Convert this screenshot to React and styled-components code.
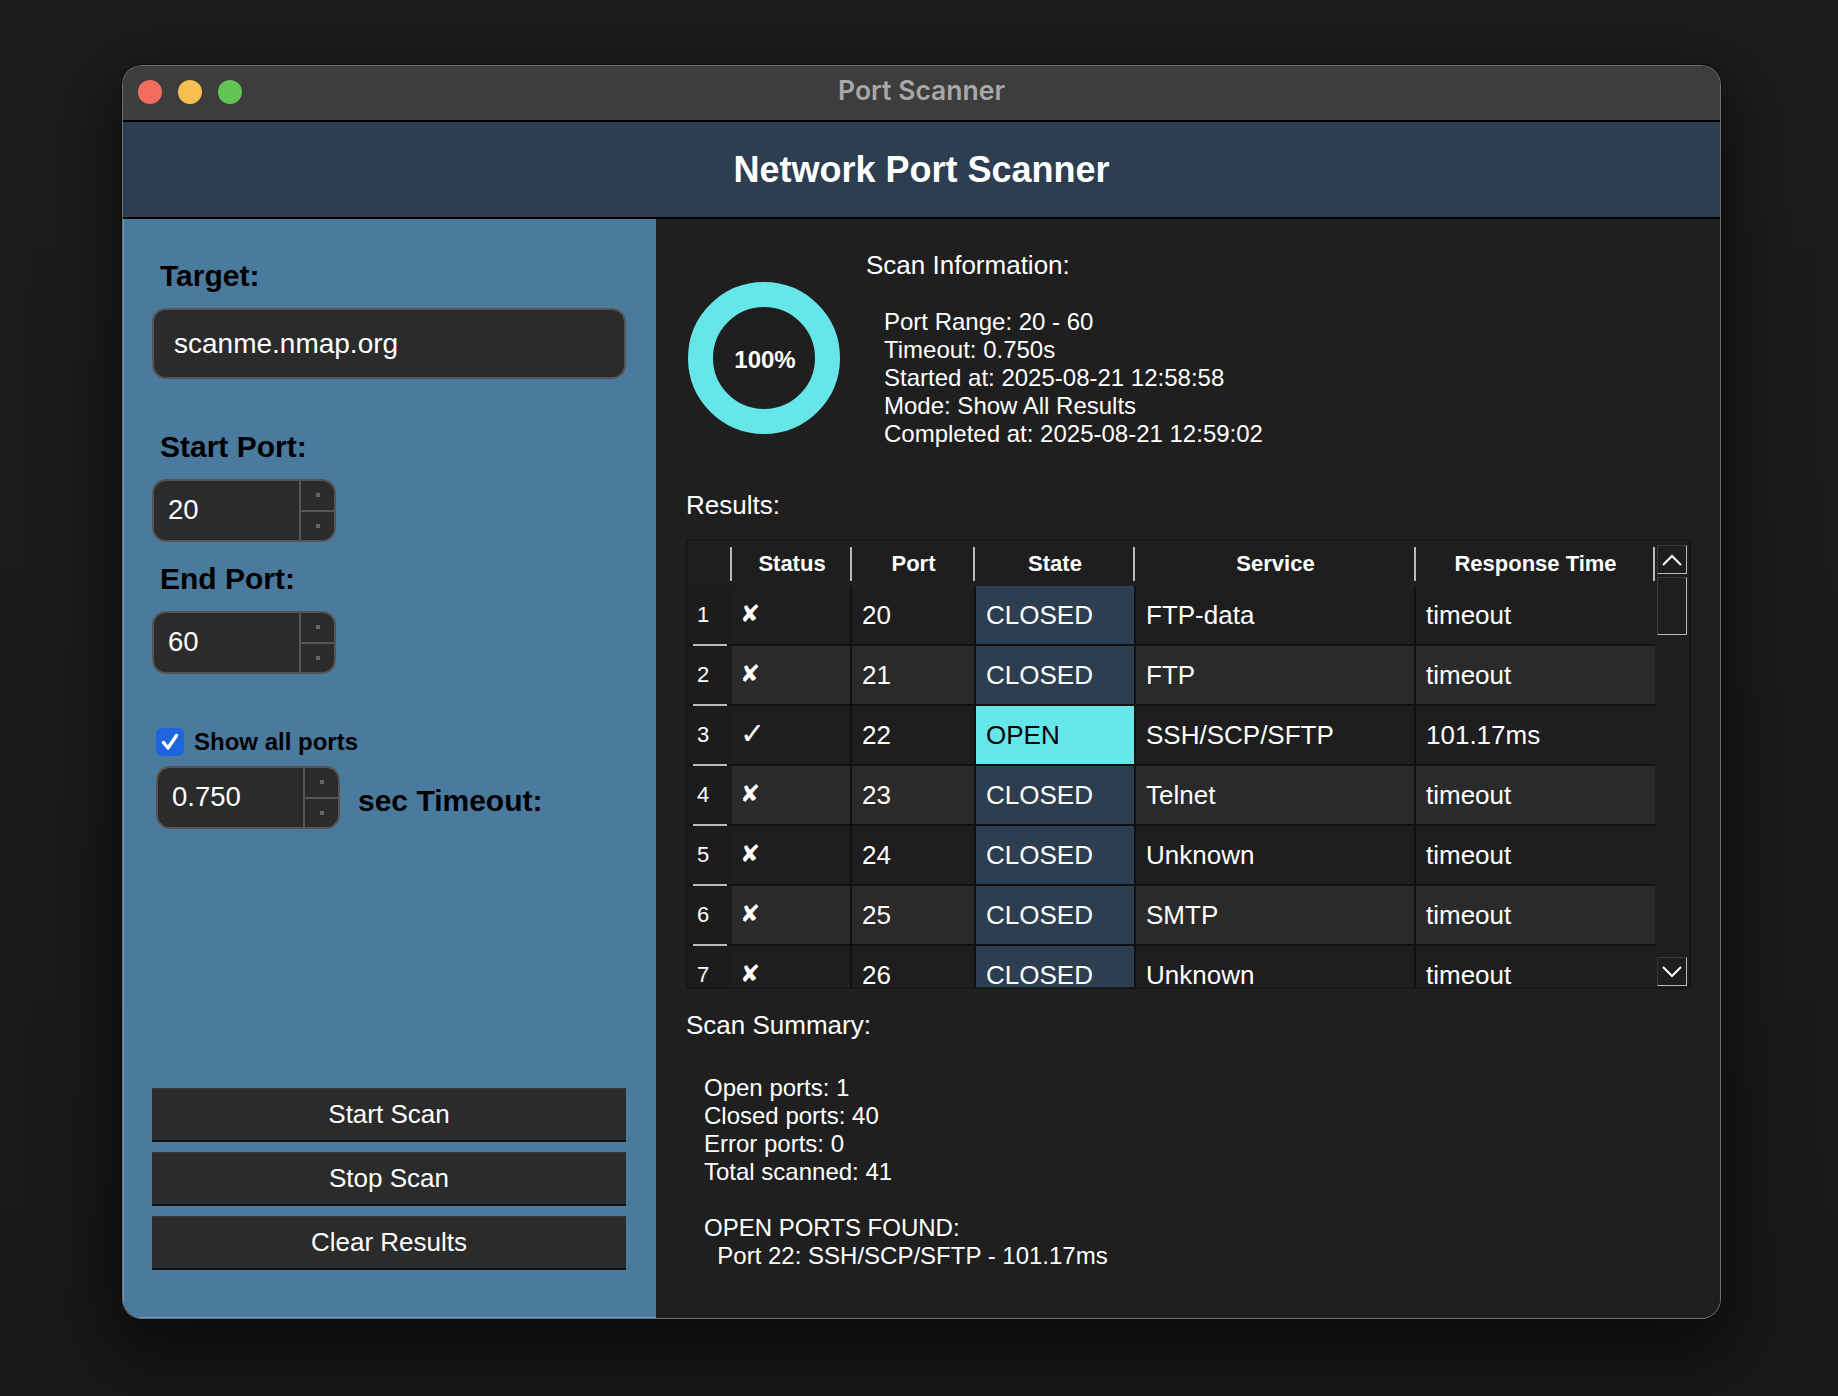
import React from "react";
import styled, { createGlobalStyle } from "styled-components";

const Global = createGlobalStyle`
  html, body { margin: 0; padding: 0; background: #1b1b1b; }
  body { font-family: "Liberation Sans", Arial, sans-serif; }
`;
const Page = styled.div`
  width: 1838px; height: 1396px; box-sizing: border-box; padding: 66px 0 0 123px;
  background: linear-gradient(#1d1d1d, #1a1a1a 70%, #181818);
  overflow: hidden;
`;
const Window = styled.div`
  width: 1597px; height: 1252px; display: flex; flex-direction: column;
  border-radius: 19px; overflow: hidden; background: #1f1f1f;
  box-shadow: 0 0 0 1px #707070, 0 0 0 2px #0c0c0c, 0 24px 70px 14px rgba(0,0,0,.55);
`;
const TitleBar = styled.div`
  height: 54px; flex: none; display: flex; align-items: center; justify-content: center; position: relative;
  background: #3d3d3d; border-bottom: 2px solid #000;
  box-sizing: content-box;
`;
const Lights = styled.div`
  position: absolute; left: 15px; top: 14px; display: flex; gap: 16px;
`;
const Light = styled.span`
  width: 24px; height: 24px; border-radius: 50%; background: ${p => p.$c};
`;
const TitleText = styled.span`
  font: 600 26.5px "Inter", sans-serif; color: #a8a8a8; padding-bottom: 6px;
`;
const Header = styled.header`
  height: 95px; flex: none; display: flex; align-items: center; justify-content: center;
  background: #2c3e50; border-bottom: 2px solid #000; box-sizing: content-box;
  color: #fff; font-size: 36px; font-weight: 700;
`;
const Body = styled.div`
  flex: 1; display: flex; min-height: 0;
`;
const Sidebar = styled.aside`
  width: 533px; flex: none; box-sizing: border-box; background: #4a7a9e;
  border-left: 1px solid #6d9cc0; border-bottom: 1px solid #6d9cc0;
  padding: 40px 30px 47px 28px; display: flex; flex-direction: column;
`;
const Label = styled.label`
  display: block; padding-left: 8px; font-size: 30px; font-weight: 700; color: #000; line-height: 34px;
  margin-bottom: 15px;
`;
const TextInput = styled.div`
  height: 71px; box-sizing: border-box; border: 2px solid #555; border-radius: 14px; background: #2b2b2b;
  color: #fff; font-size: 28px; display: flex; align-items: center; padding-left: 20px; margin-bottom: 51px;
`;
const Spin = styled.div`
  width: 184px; height: 63px; box-sizing: border-box; border: 2px solid #555; border-radius: 14px; background: #2b2b2b;
  display: flex; overflow: hidden; flex: none;
  margin-bottom: ${p => p.$mb || 0}px;
`;
const SpinValue = styled.div`
  flex: 1; color: #fff; font-size: 27.5px; display: flex; align-items: center; padding: 0 0 2px 14px;
`;
const SpinButtons = styled.div`
  width: 33px; border-left: 2px solid #555; display: flex; flex-direction: column;
`;
const SpinStep = styled.div`
  flex: 1; display: flex; align-items: center; justify-content: center;
  & + & { border-top: 2px solid #555; }
  &::after { content: ""; width: 4px; height: 4px; background: #666; }
`;
const CheckRow = styled.div`
  display: flex; align-items: center; gap: 10px; margin: 54px 0 10px 4px;
`;
const Check = styled.span`
  width: 28px; height: 28px; border-radius: 6px; background: #1f66de; display: flex; align-items: center; justify-content: center;
`;
const CheckLabel = styled.span`
  font-size: 24px; font-weight: 700; color: #000;
`;
const TimeoutRow = styled.div`
  display: flex; align-items: center; gap: 18px; padding-left: 4px;
`;
const TimeoutLabel = styled.span`
  font-size: 30px; font-weight: 700; color: #000; position: relative; top: 3px;
`;
const Buttons = styled.div`
  margin-top: auto; display: flex; flex-direction: column; gap: 10px;
`;
const Btn = styled.button`
  height: 54px; border: none; border-bottom: 2px solid #111; border-top: 1px solid #333; background: #2b2b2b;
  color: #fff; font: 26px "Liberation Sans", Arial, sans-serif; padding: 0;
`;
const Main = styled.main`
  flex: 1; min-width: 0; box-sizing: border-box; padding: 30px 30px 0 30px; background: #1f1f1f;
  color: #fff; font-size: 24px;
`;
const InfoRow = styled.section`
  display: flex; gap: 26px; height: 240px; padding-left: 2px;
`;
const Ring = styled.div`
  width: 152px; height: 152px; margin-top: 33px; border-radius: 50%; flex: none; box-sizing: border-box;
  border: 25px solid #67e6e9; display: flex; align-items: center; justify-content: center;
  font-weight: 700; font-size: 24px; color: #fff; padding: 3px 0 0 2px;
`;
const Heading = styled.div`
  font-size: 26px; line-height: 32px; color: #fff;
`;
const Lines = styled.div`
  line-height: 28px; white-space: pre; padding: ${p => p.$pad};
`;
const Frame = styled.div`
  margin-top: 18px; height: 450px; width: 1005px; display: flex; box-sizing: border-box;
  border: 2px solid #171717; background: #111; overflow: hidden;
`;
const Grid = styled.div`
  width: 967px; flex: none; overflow: hidden; display: flex; flex-direction: column;
`;
const HeadRow = styled.div`
  display: grid; grid-template-columns: 44px 120px 123px 160px 281px 239px; height: 45px; flex: none;
  background: #1e1e1e;
`;
const HeadCell = styled.div`
  display: flex; align-items: center; justify-content: center; font-size: 22px; font-weight: 700; color: #fff;
  position: relative;
  &::before { content: ""; position: absolute; left: -2px; top: 6px; bottom: 5px; width: 2px; background: #bbb; display: ${p => p.$none ? "none" : "block"}; }
  &::after { content: ""; position: absolute; right: 0; top: 6px; bottom: 5px; width: 2px; background: #bbb; display: ${p => p.$end ? "block" : "none"}; }
`;
const Row = styled.div`
  display: grid; grid-template-columns: 42px 118px 122px 158px 278px 239px; column-gap: 2px; height: 58px; flex: none; margin-bottom: 2px;
  & > *:first-child { margin-right: -2px; }
`;
const RowNum = styled.div`
  background: #1c1c1c; color: #fff; font-size: 22px; display: flex; align-items: center; justify-content: center; position: relative;
  padding-right: 14px; box-sizing: border-box;
  &::after { content: ""; position: absolute; left: 5px; right: 5px; bottom: -2px; height: 2px; background: #bbb; }
`;
const Cell = styled.div`
  background: ${p => p.$open ? "#67e6e9" : p.$closed ? "#2c3e50" : p.$alt ? "#2a2a2a" : "#1e1e1e"};
  color: ${p => p.$open ? "#000" : "#fff"}; font-size: 26px; display: flex; align-items: center; padding-left: ${p => p.$pl || 10}px;
`;
const Mark = styled.span`
  font-family: "DejaVu Sans", sans-serif; font-size: ${p => p.$ok ? 30 : 24}px; font-weight: 700; line-height: 1; position: relative; top: -1px;
`;
const Scroll = styled.div`
  width: 34px; flex: none; background: #1e1e1e; padding: 4px 2px 1px 2px; box-sizing: border-box; display: flex; flex-direction: column;
`;
const ScrollBtn = styled.div`
  height: 29px; width: 30px; box-sizing: border-box; border: 1px solid #3a3a3a; border-right-color: #bbb; border-bottom-color: #bbb; flex: none;
  display: flex; align-items: center; justify-content: center; color: #fff;
`;
const Thumb = styled.div`
  height: 58px; width: 30px; margin-top: 3px; box-sizing: border-box; border: 1px solid #3a3a3a; border-right-color: #bbb; border-bottom-color: #bbb; flex: none;
`;
const Spacer = styled.div` flex: 1; `;
const Summary = styled.section`
  margin-top: 20px;
`;

const rows = [
  [1, false, 20, "FTP-data", "timeout"],
  [2, false, 21, "FTP", "timeout"],
  [3, true, 22, "SSH/SCP/SFTP", "101.17ms"],
  [4, false, 23, "Telnet", "timeout"],
  [5, false, 24, "Unknown", "timeout"],
  [6, false, 25, "SMTP", "timeout"],
  [7, false, 26, "Unknown", "timeout"],
];

const SpinBox = ({ value, mb }) => (
  <Spin $mb={mb}>
    <SpinValue>{value}</SpinValue>
    <SpinButtons><SpinStep /><SpinStep /></SpinButtons>
  </Spin>
);

export default function App() {
  return (
    <Page>
      <Global />
      <Window>
        <TitleBar>
          <Lights>
            <Light $c="#f26d60" /><Light $c="#f6bf50" /><Light $c="#61c554" />
          </Lights>
          <TitleText>Port Scanner</TitleText>
        </TitleBar>
        <Header>Network Port Scanner</Header>
        <Body>
          <Sidebar>
            <Label>Target:</Label>
            <TextInput>scanme.nmap.org</TextInput>
            <Label>Start Port:</Label>
            <SpinBox value="20" mb={20} />
            <Label>End Port:</Label>
            <SpinBox value="60" />
            <CheckRow>
              <Check>
                <svg width="22" height="22" viewBox="0 0 22 22" fill="none"><path d="M4.5 11.5 L9 17 L17.5 4.5" stroke="#fff" strokeWidth="3.4" strokeLinecap="round" strokeLinejoin="round" /></svg>
              </Check>
              <CheckLabel>Show all ports</CheckLabel>
            </CheckRow>
            <TimeoutRow>
              <SpinBox value="0.750" />
              <TimeoutLabel>sec Timeout:</TimeoutLabel>
            </TimeoutRow>
            <Buttons>
              <Btn>Start Scan</Btn>
              <Btn>Stop Scan</Btn>
              <Btn>Clear Results</Btn>
            </Buttons>
          </Sidebar>
          <Main>
            <InfoRow>
              <Ring>100%</Ring>
              <div>
                <Heading>Scan Information:</Heading>
                <Lines $pad="27px 0 0 18px">{`Port Range: 20 - 60
Timeout: 0.750s
Started at: 2025-08-21 12:58:58
Mode: Show All Results
Completed at: 2025-08-21 12:59:02`}</Lines>
              </div>
            </InfoRow>
            <Heading>Results:</Heading>
            <Frame>
              <Grid>
                <HeadRow>
                  <HeadCell $none />
                  <HeadCell>Status</HeadCell>
                  <HeadCell>Port</HeadCell>
                  <HeadCell>State</HeadCell>
                  <HeadCell>Service</HeadCell>
                  <HeadCell $end>Response Time</HeadCell>
                </HeadRow>
                {rows.map(([n, open, port, svc, rt]) => {
                  const alt = n % 2 === 0;
                  return (
                    <Row key={n}>
                      <RowNum>{n}</RowNum>
                      <Cell $alt={alt} $pl={8}><Mark $ok={open}>{open ? "✓" : "✘"}</Mark></Cell>
                      <Cell $alt={alt}>{port}</Cell>
                      <Cell $open={open} $closed={!open}>{open ? "OPEN" : "CLOSED"}</Cell>
                      <Cell $alt={alt}>{svc}</Cell>
                      <Cell $alt={alt}>{rt}</Cell>
                    </Row>
                  );
                })}
              </Grid>
              <Scroll>
                <ScrollBtn>
                  <svg width="20" height="12" viewBox="0 0 20 12" fill="none"><path d="M1 11 L10 2 L19 11" stroke="#fff" strokeWidth="2" /></svg>
                </ScrollBtn>
                <Thumb />
                <Spacer />
                <ScrollBtn>
                  <svg width="20" height="12" viewBox="0 0 20 12" fill="none"><path d="M1 1 L10 10 L19 1" stroke="#fff" strokeWidth="2" /></svg>
                </ScrollBtn>
              </Scroll>
            </Frame>
            <Summary>
              <Heading>Scan Summary:</Heading>
              <Lines $pad="33px 0 0 18px">{`Open ports: 1
Closed ports: 40
Error ports: 0
Total scanned: 41

OPEN PORTS FOUND:
  Port 22: SSH/SCP/SFTP - 101.17ms`}</Lines>
            </Summary>
          </Main>
        </Body>
      </Window>
    </Page>
  );
}
